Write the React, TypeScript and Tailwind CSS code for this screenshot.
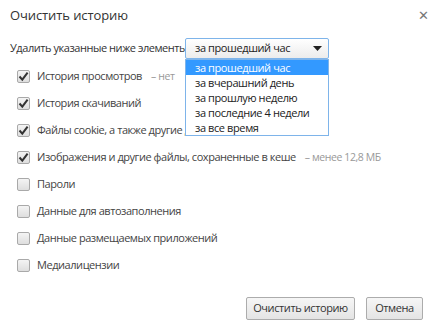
import React from 'react';

type Item = { label: string; checked: boolean; note?: string; clip?: boolean };

const items: Item[] = [
  { label: 'История просмотров', checked: true, note: 'нет' },
  { label: 'История скачиваний', checked: true },
  // эта строка уходит под открытый список, поэтому обрезаем
  { label: 'Файлы cookie, а также другие данные сайтов', checked: true, clip: true },
  { label: 'Изображения и другие файлы, сохраненные в кеше', checked: true, note: 'менее 12,8 МБ' },
  { label: 'Пароли', checked: false },
  { label: 'Данные для автозаполнения', checked: false },
  { label: 'Данные размещаемых приложений', checked: false },
  { label: 'Медиалицензии', checked: false },
];

const options = [
  'за прошедший час',
  'за вчерашний день',
  'за прошлую неделю',
  'за последние 4 недели',
  'за все время',
];

function Checkbox({ checked }: { checked: boolean }) {
  return (
    <div className="w-[13px] h-[13px] shrink-0 rounded-[2px] border border-[#a9a9a9] bg-gradient-to-b from-[#f4f4f4] to-[#dedede] flex items-center justify-center">
      {checked && (
        <svg width="11" height="11" viewBox="0 0 11 11">
          <path d="M1.5 5.5 L4.3 8.6 L9.6 1.6" fill="none" stroke="#333" strokeWidth="2" />
        </svg>
      )}
    </div>
  );
}

export default function App() {
  return (
    <div className="w-[434px] h-[329px] bg-white text-[#333] relative overflow-hidden font-['Open_Sans',sans-serif]">
      {/* заголовок */}
      <div className="flex items-start justify-between pl-[10px] pr-[4px] pt-[4px]">
        <h1 className="text-[13px] leading-[22px] text-[#333] tracking-[-0.1px]">Очистить историю</h1>
        <span className="text-[13px] leading-[22px] text-[#777] pr-[1px]">✕</span>
      </div>

      <div className="flex items-center pl-[10px] mt-[12px] h-[21px]">
        <span className="text-[11px] text-[#333] tracking-[-0.45px] w-[175px] whitespace-nowrap">
          Удалить указанные ниже элементы
        </span>
        <div className="relative w-[144px] h-[21px]">
          <div className="w-full h-full border border-[#7eb4ea] rounded-[2px] bg-gradient-to-b from-white to-[#ececec] flex items-center justify-between pl-[9px] pr-[6px]">
            <span className="text-[11px] tracking-[-0.4px] text-[#222] whitespace-nowrap">за прошедший час</span>
            <svg width="9" height="6" viewBox="0 0 9 6">
              <path d="M0 0 H9 L4.5 5 Z" fill="#222" />
            </svg>
          </div>
          {/* выпадающий список */}
          <div className="absolute left-0 top-[21px] w-[144px] bg-white border border-[#7eb4ea] z-10 flex flex-col">
            {options.map((o, i) => (
              <div
                key={o}
                className={
                  'h-[15px] pl-[9px] text-[11px] leading-[15px] tracking-[-0.4px] whitespace-nowrap ' +
                  (i === 0 ? 'bg-[#3399ff] text-white' : 'text-[#222]')
                }
              >
                {o}
              </div>
            ))}
          </div>
        </div>
      </div>

      <div className="flex flex-col pl-[17px] mt-[4px]">
        {items.map((it) => (
          <div key={it.label} className="flex items-center h-[27px] gap-[7px] whitespace-nowrap">
            <Checkbox checked={it.checked} />
            <span
              className={
                'text-[11px] tracking-[-0.45px] text-[#444] ' +
                (it.clip ? 'max-w-[148px] overflow-hidden' : '')
              }
            >
              {it.label}
            </span>
            {it.note && (
              <span className="text-[10.5px] tracking-[-0.4px] text-[#999] ml-[2px]">– {it.note}</span>
            )}
          </div>
        ))}
      </div>

      <div className="absolute bottom-[9px] right-[11px] flex gap-[11px]">
        <button className="h-[23px] w-[109px] border border-[#acacac] rounded-[2px] bg-gradient-to-b from-[#f6f6f6] to-[#e4e4e4] text-[11px] tracking-[-0.4px] text-[#333]">
          Очистить историю
        </button>
        <button className="h-[23px] w-[57px] border border-[#acacac] rounded-[2px] bg-gradient-to-b from-[#f6f6f6] to-[#e4e4e4] text-[11px] tracking-[-0.4px] text-[#333]">
          Отмена
        </button>
      </div>
    </div>
  );
}
